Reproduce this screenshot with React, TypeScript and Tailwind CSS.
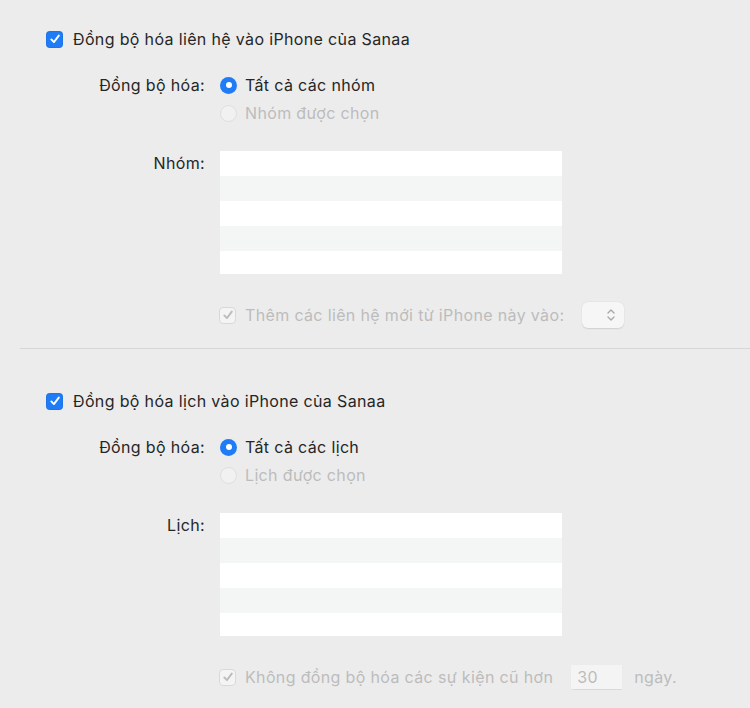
import React from "react";

function CheckBox({ disabled = false }: { disabled?: boolean }) {
  return (
    <span
      className={`flex h-[17px] w-[17px] shrink-0 items-center justify-center rounded-[4px] ${
        disabled
          ? "border border-[#d9d9d9] bg-[#f4f4f4]"
          : "bg-[#1f7cf6] shadow-[inset_0_0_0_1px_rgba(0,0,0,0.06)]"
      }`}
    >
      <svg width="12" height="12" viewBox="0 0 12 12" fill="none">
        <path
          d="M2.3 6.4 L4.9 9.1 L9.8 2.6"
          stroke={disabled ? "#bcbcbc" : "#ffffff"}
          strokeWidth="1.9"
          strokeLinecap="round"
          strokeLinejoin="round"
        />
      </svg>
    </span>
  );
}

function Radio({ checked = false }: { checked?: boolean }) {
  return checked ? (
    <span className="flex h-[17px] w-[17px] shrink-0 items-center justify-center rounded-full bg-[#1f7cf6]">
      <span className="h-[6px] w-[6px] rounded-full bg-white" />
    </span>
  ) : (
    <span className="h-[17px] w-[17px] shrink-0 rounded-full border border-[#dedede] bg-[#f1f1f1]" />
  );
}

function ListBox() {
  const rows = [0, 1, 2, 3, 4];
  return (
    <div className="flex h-[123px] w-[342px] flex-col bg-white">
      {rows.map((r) => (
        <div
          key={r}
          className={`${r === 4 ? "flex-1" : "h-[25px]"} ${
            r % 2 === 1 ? "bg-[#f4f5f5]" : "bg-white"
          }`}
        />
      ))}
    </div>
  );
}

function Section({
  title,
  all,
  chosen,
  label,
  footer,
}: {
  title: string;
  all: string;
  chosen: string;
  label: string;
  footer: React.ReactNode;
}) {
  return (
    <div>
      <div className="flex h-[22px] items-center gap-[10px] pl-[46px]">
        <CheckBox />
        <span className="text-[#262626]">{title}</span>
      </div>

      <div className="mt-[21px] flex">
        <div className="w-[205px] pt-[3px] text-right leading-[22px] text-[#262626]">
          Đồng bộ hóa:
        </div>
        <div className="ml-[15px] flex flex-col">
          <div className="flex h-[28px] items-center gap-[8px]">
            <Radio checked />
            <span className="text-[#262626]">{all}</span>
          </div>
          <div className="flex h-[28px] items-center gap-[8px]">
            <Radio />
            <span className="text-[#bcbcbc]">{chosen}</span>
          </div>
        </div>
      </div>

      <div className="mt-[24px] flex">
        <div className="w-[205px] pt-px text-right leading-[22px] text-[#262626]">{label}</div>
        <div className="ml-[15px]">
          <ListBox />
        </div>
      </div>

      <div className="mt-[27px] flex h-[28px] items-center pl-[219px]">{footer}</div>
    </div>
  );
}

export default function App() {
  return (
    <div
      className="h-[708px] w-[750px] overflow-hidden bg-[#ececec] text-[16px] tracking-[0.35px]"
      style={{ fontFamily: 'Inter, "Noto Sans", sans-serif' }}
    >
      <div className="pt-[28px]">
        <Section
          title="Đồng bộ hóa liên hệ vào iPhone của Sanaa"
          all="Tất cả các nhóm"
          chosen="Nhóm được chọn"
          label="Nhóm:"
          footer={
            <div className="flex items-center">
              <CheckBox disabled />
              <span className="ml-[9px] text-[#bcbcbc]">
                Thêm các liên hệ mới từ iPhone này vào:
              </span>
              <div className="ml-[18px] flex h-[26px] w-[42px] items-center justify-end rounded-[6px] bg-[#f6f6f6] pr-[8px] shadow-[0_0.5px_1.5px_rgba(0,0,0,0.12)]">
                <svg width="10" height="14" viewBox="0 0 10 14" fill="none">
                  <path
                    d="M2 5 L5 2 L8 5 M2 9 L5 12 L8 9"
                    stroke="#a8a8a8"
                    strokeWidth="1.4"
                    strokeLinecap="round"
                    strokeLinejoin="round"
                  />
                </svg>
              </div>
            </div>
          }
        />

        <div className="ml-[20px] mt-[19px] h-px bg-[#d6d6d6]" />

        <div className="pt-[41px]">
          <Section
            title="Đồng bộ hóa lịch vào iPhone của Sanaa"
            all="Tất cả các lịch"
            chosen="Lịch được chọn"
            label="Lịch:"
            footer={
              <div className="flex items-center">
                <CheckBox disabled />
                <span className="ml-[9px] text-[#bcbcbc]">
                  Không đồng bộ hóa các sự kiện cũ hơn
                </span>
                <div className="ml-[18px] flex h-[24px] w-[51px] items-center bg-[#f4f4f4] pl-[6px] text-[#bcbcbc] shadow-[0_0.5px_1px_rgba(0,0,0,0.08)]">
                  30
                </div>
                <span className="ml-[12px] text-[#bcbcbc]">ngày.</span>
              </div>
            }
          />
        </div>
      </div>
    </div>
  );
}
